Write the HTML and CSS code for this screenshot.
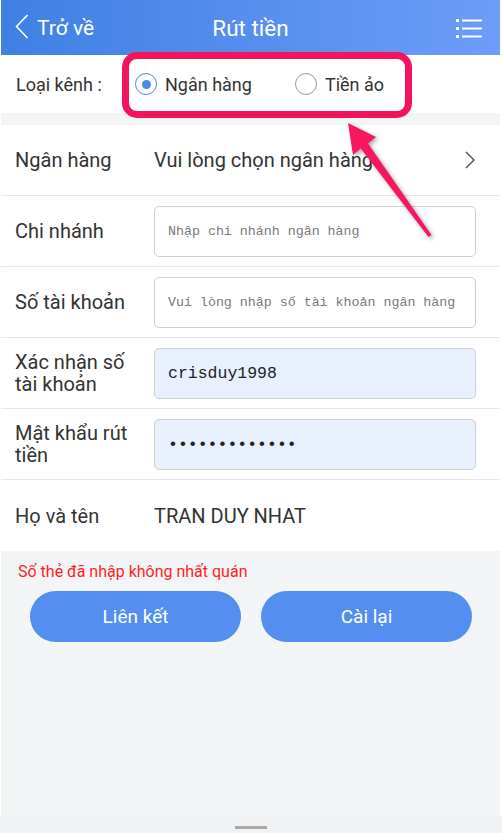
FILE: index.html
```html
<!DOCTYPE html>
<html>
<head>
   <meta charset="utf-8">
   <meta name="viewport" content="width=device-width, initial-scale=1">
   <title>Rút tiền</title>
   <link rel="stylesheet" href="styles.css">
</head>
<body>
   <div class="app">
      <header class="topbar">
         <a class="back">
            <svg width="14" height="25" viewBox="0 0 14 25"><path d="M12.5 1 L1.5 12.5 L12.5 24" fill="none" stroke="#fff" stroke-width="1.6"/></svg>
            <span>Trở về</span>
         </a>
         <h1 class="title">Rút tiền</h1>
         <div class="menu">
            <svg width="26" height="20" viewBox="0 0 26 20"><g fill="#fff"><rect x="0" y="1" width="3" height="3"/><rect x="0" y="9" width="3" height="3"/><rect x="0" y="17" width="3" height="3"/><rect x="6" y="1.5" width="20" height="2"/><rect x="6" y="9.5" width="20" height="2"/><rect x="6" y="17.5" width="20" height="2"/></g></svg>
         </div>
      </header>

      <div class="channel">
         <span class="channel-label">Loại kênh :</span>
         <label class="radio checked"><span class="dot"></span>Ngân hàng</label>
         <label class="radio"><span class="dot"></span>Tiền ảo</label>
      </div>

      <div class="form">
         <div class="row">
            <div class="label">Ngân hàng</div>
            <div class="value">Vui lòng chọn ngân hàng</div>
            <svg class="chev" width="10" height="18" viewBox="0 0 10 18"><path d="M1 1 L9 9 L1 17" fill="none" stroke="#555" stroke-width="1.5"/></svg>
         </div>
         <div class="row">
            <div class="label">Chi nhánh</div>
            <input class="field" type="text" placeholder="Nhập chi nhánh ngân hàng">
         </div>
         <div class="row">
            <div class="label">Số tài khoản</div>
            <input class="field" type="text" placeholder="Vui lòng nhập số tài khoản ngân hàng">
         </div>
         <div class="row">
            <div class="label">Xác nhận số tài khoản</div>
            <input class="field filled" type="text" value="crisduy1998">
         </div>
         <div class="row">
            <div class="label">Mật khẩu rút tiền</div>
            <input class="field filled" type="password" value="abcdefghijklm">
         </div>
         <div class="row last">
            <div class="label">Họ và tên</div>
            <div class="value">TRAN DUY NHAT</div>
         </div>
      </div>

      <p class="error">Số thẻ đã nhập không nhất quán</p>
      <div class="actions">
         <button class="btn">Liên kết</button>
         <button class="btn">Cài lại</button>
      </div>

      <!-- annotation -->
      <div class="highlight"></div>
      <svg class="pointer" width="502" height="260" viewBox="0 0 502 260">
         <polygon points="348,123 376,137 368,143.4 431.5,235 428.5,237 360.8,148.5 353,155" fill="#f7175f"/>
      </svg>
   </div>
   <div class="navbar"><span class="handle"></span></div>
</body>
</html>
```

FILE: styles.css
```css
body{
   margin: 0;
   background: #fff;
   font-family: Roboto, "Noto Sans", sans-serif;
   color: #333;
}

.app{
   position: relative;
   margin-left: 1px;
   width: 499px;
   height: 816px;
   background: #f3f4f6;
   overflow: hidden;
}

.topbar{
   display: grid;
   grid-template-columns: 1fr auto 1fr;
   align-items: center;
   height: 55px;
   background: linear-gradient(90deg, #3f80e4, #6d9cf9);
   color: #fff;
}
.back{
   display: flex;
   align-items: center;
   gap: 8px;
   padding-left: 14px;
   font-size: 21px;
}
.back svg{
   margin-top: -2px;
}
.title{
   margin: 0;
   font-size: 22.5px;
   font-weight: 400;
}
.menu{
   justify-self: end;
   padding-right: 18px;
   display: flex;
}

.channel{
   display: flex;
   align-items: center;
   height: 58px;
   padding-left: 15px;
   background: #fff;
   font-size: 18px;
   margin-bottom: 12px;
}
.channel-label{
   flex: 0 0 119px;
}
.radio{
   display: flex;
   align-items: center;
   gap: 8px;
   margin-right: 43px;
}
.radio .dot{
   box-sizing: border-box;
   width: 22px;
   height: 22px;
   border: 1.5px solid #9a9a9a;
   border-radius: 50%;
   display: flex;
   align-items: center;
   justify-content: center;
}
.radio.checked .dot{
   border-color: #4a8af0;
}
.radio.checked .dot::after{
   content: "";
   width: 9px;
   height: 9px;
   border-radius: 50%;
   background: #4a8af0;
}

.form{
   background: #fff;
}
.row{
   display: flex;
   align-items: center;
   height: 70px;
   padding: 0 24px 0 14px;
   border-bottom: 1px solid #e6e6e6;
   font-size: 20px;
   gap: 14px;
}
.row.last{
   height: 71px;
   border-bottom: none;
}
.label{
   flex: 0 0 125px;
   line-height: 22px;
}
.value{
   flex: 1;
}
.chev{
   margin-right: 1px;
}
.field{
   flex: 1;
   box-sizing: border-box;
   height: 51px;
   border: 1px solid #cfcfcf;
   border-radius: 5px;
   padding: 0 13px;
   font-family: "Liberation Mono", monospace;
   font-size: 13.3px;
   color: #222;
   background: #fff;
   outline: none;
}
.field::placeholder{
   color: #7a7a7a;
}
.field.filled{
   background: #e8f0fe;
   font-size: 16.5px;
}

.error{
   margin: 0;
   padding: 10px 0 0 17px;
   line-height: 22px;
   font-size: 16px;
   color: #ff1f1f;
}
.actions{
   display: flex;
   gap: 20px;
   padding: 8px 28px 0 29px;
}
.btn{
   flex: 1;
   height: 51px;
   border: none;
   border-radius: 26px;
   background: #548eee;
   color: #fff;
   font-family: Roboto, sans-serif;
   font-size: 19px;
}

.highlight{
   position: absolute;
   left: 121px;
   top: 52px;
   width: 276px;
   height: 52px;
   border: 7px solid #f5145c;
   border-radius: 15px;
}
.pointer{
   position: absolute;
   left: -1px;
   top: 0;
   filter: drop-shadow(2px 2px 2px rgba(0,0,0,0.35));
}

.navbar{
   height: 17px;
   background: #f1f2f4;
   display: flex;
   justify-content: center;
}
.handle{
   margin-top: 10px;
   width: 32px;
   height: 3px;
   background: #a9a9a9;
}
```
